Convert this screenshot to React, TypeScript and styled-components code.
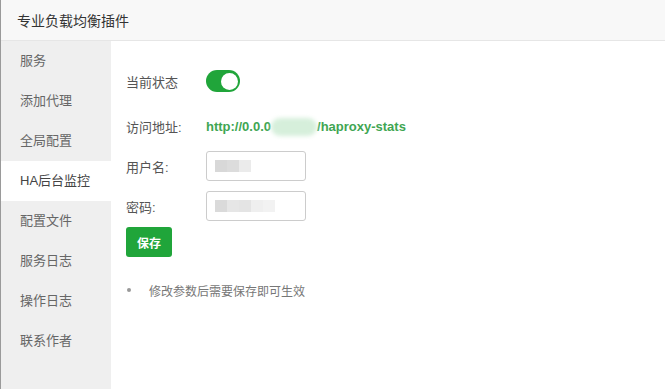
import * as React from "react";
import styled, { createGlobalStyle } from "styled-components";

const GlobalStyle = createGlobalStyle`
    html, body {
        margin: 0;
        padding: 0;
        background: #fff;
    }
    body {
        font-family: "Liberation Sans", "Noto Sans CJK SC", sans-serif;
        color: #333;
    }
`;

const Frame = styled.div`
    height: 100vh;
    display: flex;
    flex-direction: column;
    border-left: 1px solid #9a9a9a;
    box-sizing: border-box;
`;

const Header = styled.div`
    height: 40px;
    flex-shrink: 0;
    background: #f8f8f8;
    border-bottom: 1px solid #e6e6e6;
    display: flex;
    align-items: center;
    padding-left: 16px;
    font-size: 14px;
    color: #333;
`;

const Body = styled.div`
    flex: 1;
    display: flex;
`;

const Sidebar = styled.div`
    width: 110px;
    background: #efefef;
    display: flex;
    flex-direction: column;
`;

const MenuItem = styled.div<{ $active?: boolean }>`
    height: 40px;
    line-height: 40px;
    padding-left: 19px;
    font-size: 13px;
    color: ${props => props.$active ? '#444' : '#666'};
    background: ${props => props.$active ? '#fff' : 'transparent'};
`;

const Content = styled.div`
    flex: 1;
    padding: 14px 0 0 15px;
`;

const Row = styled.div<{ $height: number }>`
    display: flex;
    align-items: center;
    height: ${props => props.$height}px;
`;

const Label = styled.span`
    width: 80px;
    font-size: 13px;
    color: #555;
`;

const Toggle = styled.div`
    width: 34px;
    height: 22px;
    border-radius: 11px;
    background: #20a53a;
    display: flex;
    justify-content: flex-end;
    align-items: center;
    padding: 2px;
    box-sizing: border-box;
`;

const Knob = styled.div`
    width: 17px;
    height: 17px;
    border-radius: 50%;
    background: #fff;
`;

const Link = styled.span`
    display: flex;
    align-items: center;
    font-size: 13px;
    font-weight: 600;
    color: #3fa653;
`;

const Blur = styled.span<{ $w: number; $color: string }>`
    display: inline-block;
    width: ${props => props.$w}px;
    height: 18px;
    border-radius: 9px;
    background: ${props => props.$color};
    filter: blur(2px);
`;

const Input = styled.div`
    width: 100px;
    height: 30px;
    box-sizing: border-box;
    border: 1px solid #ccc;
    border-radius: 3px;
    display: flex;
    align-items: center;
    padding-left: 8px;
`;

const Pixel = styled.span<{ $shade: string }>`
    width: 12px;
    height: 12px;
    background: ${props => props.$shade};
    filter: blur(0.6px);
`;

const SaveButton = styled.button`
    width: 46px;
    height: 30px;
    border: none;
    border-radius: 3px;
    background: #20a53a;
    color: #fff;
    font-family: inherit;
    font-size: 12px;
    font-weight: bold;
    padding: 0;
`;

const Note = styled.div`
    display: flex;
    align-items: center;
    margin-top: 22px;
    height: 20px;
    font-size: 12px;
    color: #777;
`;

const Dot = styled.span`
    width: 4px;
    height: 4px;
    border-radius: 50%;
    background: #999;
    margin: 0 18px 0 1px;
`;

const menu = ['服务', '添加代理', '全局配置', 'HA后台监控', '配置文件', '服务日志', '操作日志', '联系作者'];

export default function App() {
    return <Frame>
        <GlobalStyle/>
        <Header>专业负载均衡插件</Header>
        <Body>
            <Sidebar>
                {menu.map((item, index) => <MenuItem key={index} $active={index === 3}>{item}</MenuItem>)}
            </Sidebar>
            <Content>
                <Row $height={52}>
                    <Label>当前状态</Label>
                    <Toggle><Knob/></Toggle>
                </Row>
                <Row $height={39}>
                    <Label>访问地址:</Label>
                    <Link>
                        http://0.0.0
                        <Blur $w={46} $color="#d6efdb"/>
                        /haproxy-stats
                    </Link>
                </Row>
                <Row $height={40}>
                    <Label>用户名:</Label>
                    <Input>
                        <Pixel $shade="#d8d8d8"/>
                        <Pixel $shade="#dcdcdc"/>
                        <Pixel $shade="#ebebeb"/>
                    </Input>
                </Row>
                <Row $height={40}>
                    <Label>密码:</Label>
                    <Input>
                        <Pixel $shade="#dadada"/>
                        <Pixel $shade="#e6e6e6"/>
                        <Pixel $shade="#e4e4e4"/>
                        <Pixel $shade="#efefef"/>
                        <Pixel $shade="#f2f2f2"/>
                    </Input>
                </Row>
                <Row $height={32}>
                    <SaveButton>保存</SaveButton>
                </Row>
                <Note>
                    <Dot/>
                    修改参数后需要保存即可生效
                </Note>
            </Content>
        </Body>
    </Frame>;
}
